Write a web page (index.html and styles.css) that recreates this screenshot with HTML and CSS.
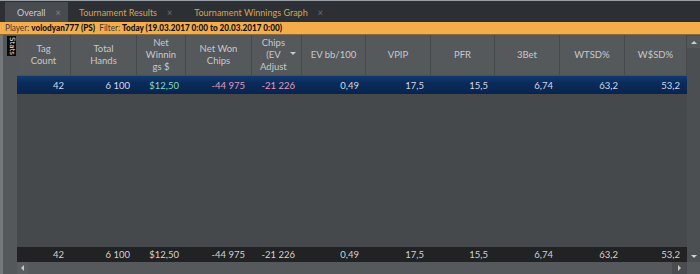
FILE: index.html
```html
<!DOCTYPE html>
<html>
<head>
<meta charset="utf-8">
<link rel="stylesheet" href="styles.css">
</head>
<body>
<div class="app">
  <div class="tabs">
    <div class="tab active"><span>Overall</span><span class="x">×</span></div>
    <div class="tab"><span>Tournament Results</span><span class="x">×</span></div>
    <div class="tab"><span>Tournament Winnings Graph</span><span class="x">×</span></div>
  </div>
  <div class="filter">
    <span class="ftext"><span class="lbl">Player:</span> <b>volodyan777 (PS)</b>&nbsp;&nbsp;<span class="lbl">Filter:</span> <b>Today (19.03.2017 0:00 to 20.03.2017 0:00)</b></span>
  </div>
  <div class="main">
    <div class="side"><div class="stats">Stats</div></div>
    <div class="gridwrap">
      <div class="table">
        <div class="row head">
          <div class="c">Tag<br>Count</div>
          <div class="c">Total<br>Hands</div>
          <div class="c">Net<br>Winnin<br>gs $</div>
          <div class="c">Net Won<br>Chips</div>
          <div class="c sort">Chips<br>(EV<br>Adjust<span class="arrow"></span></div>
          <div class="c">EV bb/100</div>
          <div class="c">VPIP</div>
          <div class="c">PFR</div>
          <div class="c">3Bet</div>
          <div class="c">WTSD%</div>
          <div class="c">W$SD%</div>
        </div>
        <div class="row data sel">
          <div class="c">42</div>
          <div class="c">6 100</div>
          <div class="c pos">$12,50</div>
          <div class="c neg">-44 975</div>
          <div class="c neg">-21 226</div>
          <div class="c">0,49</div>
          <div class="c">17,5</div>
          <div class="c">15,5</div>
          <div class="c">6,74</div>
          <div class="c">63,2</div>
          <div class="c">53,2</div>
        </div>
        <div class="empty"></div>
        <div class="row data total">
          <div class="c">42</div>
          <div class="c">6 100</div>
          <div class="c">$12,50</div>
          <div class="c">-44 975</div>
          <div class="c">-21 226</div>
          <div class="c">0,49</div>
          <div class="c">17,5</div>
          <div class="c">15,5</div>
          <div class="c">6,74</div>
          <div class="c">63,2</div>
          <div class="c">53,2</div>
        </div>
        <div class="hscroll">
          <div class="sbtn left"><span class="tri-l"></span></div>
          <div class="track"></div>
          <div class="sbtn right"><span class="tri-r"></span></div>
        </div>
      </div>
      <div class="vscroll">
        <div class="vbtn up"><span class="tri-u"></span></div>
        <div class="vtrack"></div>
        <div class="vbtn down"><span class="tri-d"></span></div>
        <div class="corner"></div>
      </div>
    </div>
  </div>
</div>
</body>
</html>
```
FILE: styles.css
```css
* { box-sizing: border-box; }
html, body { margin: 0; padding: 0; }
body {
  width: 700px;
  height: 274px;
  overflow: hidden;
  background: #55585b;
  font-family: Lato, "Open Sans", sans-serif;
}
.app { display: flex; flex-direction: column; height: 274px; }

.tabs {
  height: 22px;
  background: #2c3034;
  border-top: 1px solid #9ba0a6;
  display: flex;
  padding-left: 5px;
  padding-top: 1px;
}
.tab {
  display: flex;
  align-items: center;
  gap: 10px;
  padding: 0 11px 0 11px;
  font-size: 9px;
  color: #d9a24a;
  height: 20px;
  white-space: nowrap;
}
.tab .x { color: #6d7074; font-size: 9px; }
.tab.active {
  background: #484c51;
  color: #c9cbce;
  width: 63px;
  padding-left: 12px;
}
.tab.active .x { color: #80848a; }

.filter {
  height: 13px;
  background: #f3ad4b;
  border-bottom: 1px solid #8a6a38;
  padding-left: 5px;
  white-space: nowrap;
  display: flex;
  align-items: center;
}
.ftext {
  display: block;
  font-family: Lato, sans-serif;
  font-size: 9.5px;
  line-height: 12px;
  color: #1c1c1c;
  transform: scaleX(0.86);
  transform-origin: left center;
}
.filter .lbl { color: #3e3a34; }
.filter b { color: #111; font-weight: 900; }

.main { flex: 1; display: flex; min-height: 0; }
.side {
  width: 17px;
  background: #55585b;
  border-left: 3px solid #75787b;
  padding-left: 4px;
  padding-top: 1px;
}
.stats {
  width: 9px;
  height: 20px;
  background: #0a0a0a;
  color: #e8e8e8;
  writing-mode: vertical-rl;
  font-size: 7px;
  line-height: 9px;
  text-align: center;
  font-family: "DejaVu Sans", sans-serif;
}

.gridwrap { flex: 1; display: flex; }
.table { width: 670px; display: flex; flex-direction: column; }

.row {
  display: grid;
  grid-template-columns: 54px 66px 49px 66px 50px 64px 65px 64px 65px 65px 62px;
}
.head { height: 40px; background: #56595c; }
.head .c {
  border-right: 1px solid #47494c;
  color: #c6c8ca;
  font-size: 9.5px;
  line-height: 12px;
  display: flex;
  align-items: center;
  justify-content: center;
  text-align: center;
  position: relative;
}
.head .sort { justify-content: flex-start; padding-left: 8px; }
.arrow {
  position: absolute;
  right: 5px;
  top: 17px;
  width: 0; height: 0;
  border-left: 3px solid transparent;
  border-right: 3px solid transparent;
  border-top: 3px solid #c8c8c8;
}

.data { height: 19px; }
.data .c {
  font-size: 9.5px;
  line-height: 19px;
  text-align: right;
  padding-right: 7px;
  color: #d4dae6;
  white-space: nowrap;
}
.sel {
  background: linear-gradient(#123a6e, #0a2b5a 40%, #08244c);
  border-top: 1px solid #2a568e;
}
.sel .pos { color: #82dcc0; }
.sel .neg { color: #e69ab8; }

.empty { flex: 1; background: #46494c; }
.total { height: 15px; background: #202224; }
.total .c { line-height: 15px; color: #d2d2d2; }

.hscroll { height: 12px; display: flex; background: #56595c; }
.sbtn { width: 11px; height: 12px; display: flex; align-items: center; justify-content: center; }
.sbtn.left { background: #5b5e61; }
.sbtn.right { width: 15px; background: #4a4d50; }
.track { flex: 1; }
.tri-l { width: 0; height: 0; border-top: 3px solid transparent; border-bottom: 3px solid transparent; border-right: 3px solid #c8c8c8; }
.tri-r { width: 0; height: 0; border-top: 3px solid transparent; border-bottom: 3px solid transparent; border-left: 3px solid #c8c8c8; }

.vscroll { width: 13px; display: flex; flex-direction: column; background: #4c4f52; }
.vbtn { height: 12px; display: flex; align-items: center; justify-content: center; }
.vbtn.up { background: #55585b; margin-top: 1px; }
.vbtn.down { background: #4c4f52; }
.vtrack { flex: 1; }
.corner { height: 12px; background: #56595c; }
.tri-u { width: 0; height: 0; border-left: 3px solid transparent; border-right: 3px solid transparent; border-bottom: 3px solid #d0d0d0; }
.tri-d { width: 0; height: 0; border-left: 3px solid transparent; border-right: 3px solid transparent; border-top: 3px solid #d0d0d0; }
```
